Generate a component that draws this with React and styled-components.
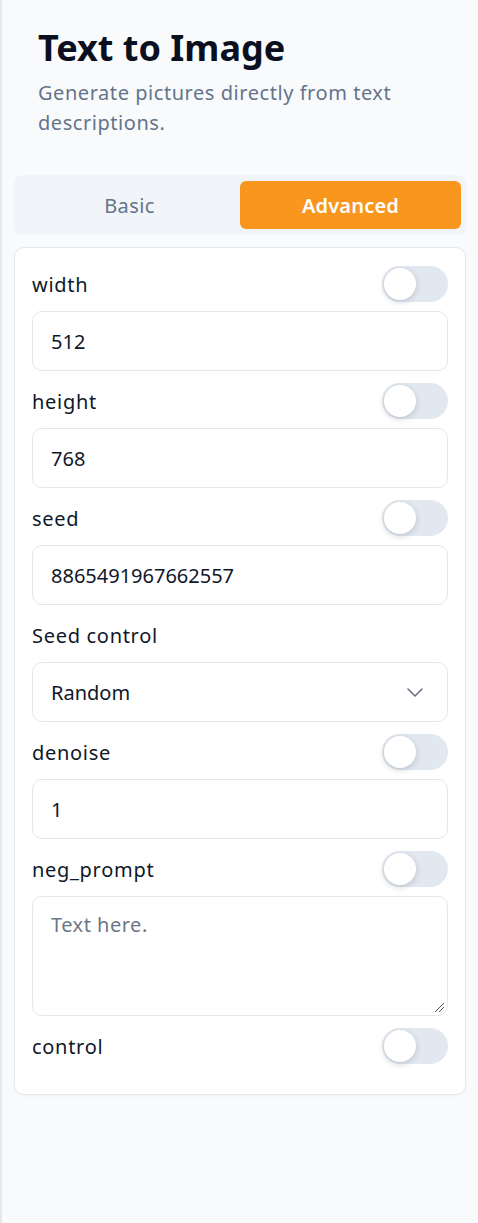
import React from 'react';
import styled, { createGlobalStyle } from 'styled-components';

const GlobalStyle = createGlobalStyle`
  html, body {
    margin: 0;
    padding: 0;
    background: #f9fafb;
  }
  * {
    box-sizing: border-box;
  }
  body {
    font-family: "Noto Sans", "Open Sans", sans-serif;
    color: #0f172a;
  }
`;

const Panel = styled.div`
  min-height: 100vh;
  border-left: 2px solid #e5e7eb;
  background: #f9fafb;
  padding: 0 12px 40px 12px;
`;

const Header = styled.div`
  padding: 24px 24px 0 24px;
`;

const Title = styled.h1`
  margin: 0;
  font-size: 36px;
  line-height: 48px;
  font-weight: 700;
  color: #0b1020;
`;

const Subtitle = styled.p`
  margin: 6px 0 0;
  font-size: 20px;
  line-height: 30px;
  letter-spacing: 0.55px;
  color: #64748b;
`;

const Tabs = styled.div`
  margin-top: 37px;
  display: grid;
  grid-template-columns: 1fr 1fr;
  padding: 6px 5px;
  background: #f1f5f9;
  border-radius: 8px;
`;

const Tab = styled.button`
  height: 48px;
  border: none;
  border-radius: 6px;
  font-family: inherit;
  font-size: 20px;
  letter-spacing: ${(p) => (p.$active ? '0.2px' : '0.4px')};
  font-weight: ${(p) => (p.$active ? 600 : 400)};
  color: ${(p) => (p.$active ? '#ffffff' : '#64748b')};
  background: ${(p) => (p.$active ? '#f8961e' : 'transparent')};
  cursor: pointer;
`;

const Card = styled.div`
  margin-top: 12px;
  background: #ffffff;
  border: 1px solid #e5e7eb;
  border-radius: 10px;
  box-shadow: 0 1px 3px rgba(0, 0, 0, 0.04);
  padding: 18px 17px 30px;
  display: flex;
  flex-direction: column;
  gap: 12px;
`;

const Field = styled.div`
  display: flex;
  flex-direction: column;
  gap: 9px;
`;

const LabelRow = styled.div`
  display: flex;
  align-items: center;
  justify-content: space-between;
  height: 36px;
`;

const Label = styled.span`
  font-size: 20px;
  letter-spacing: 0.7px;
  color: #0f172a;
`;

const Switch = styled.span`
  position: relative;
  width: 66px;
  height: 36px;
  border-radius: 18px;
  background: #e2e8f0;
  flex-shrink: 0;
`;

const Knob = styled.span`
  position: absolute;
  top: 2px;
  left: 2px;
  width: 32px;
  height: 32px;
  border-radius: 50%;
  background: #ffffff;
  box-shadow: 0 2px 6px rgba(15, 23, 42, 0.18);
`;

const Box = styled.div`
  height: ${(p) => p.$h || 60}px;
  border: 1px solid #e5e7eb;
  border-radius: 10px;
  background: #ffffff;
  padding: 0 18px;
  display: flex;
  align-items: ${(p) => (p.$top ? 'flex-start' : 'center')};
  justify-content: space-between;
  font-size: 20px;
  color: #0f172a;
  position: relative;
`;

const Placeholder = styled.span`
  padding-top: 14px;
  letter-spacing: 0.5px;
  color: #6b7788;
`;

const Chevron = styled.svg`
  margin-right: 6px;
`;

const Grip = styled.svg`
  position: absolute;
  right: 2px;
  bottom: 2px;
`;

const Toggle = () => (
  <Switch>
    <Knob />
  </Switch>
);

const NumberField = ({ label, value }) => (
  <Field>
    <LabelRow>
      <Label>{label}</Label>
      <Toggle />
    </LabelRow>
    <Box>{value}</Box>
  </Field>
);

const App = () => (
  <>
    <GlobalStyle />
    <Panel>
      <Header>
        <Title>Text to Image</Title>
        <Subtitle>Generate pictures directly from text descriptions.</Subtitle>
      </Header>
      <Tabs>
        <Tab>Basic</Tab>
        <Tab $active>Advanced</Tab>
      </Tabs>
      <Card>
        <NumberField label="width" value="512" />
        <NumberField label="height" value="768" />
        <NumberField label="seed" value="8865491967662557" />
        <Field>
          <LabelRow>
            <Label>Seed control</Label>
          </LabelRow>
          <Box>
            Random
            <Chevron width="16" height="9" viewBox="0 0 16 9" fill="none" stroke="#6b7280" strokeWidth="1.6" strokeLinecap="round" strokeLinejoin="round">
              <path d="M1 1 L8 8 L15 1" />
            </Chevron>
          </Box>
        </Field>
        <NumberField label="denoise" value="1" />
        <Field>
          <LabelRow>
            <Label>neg_prompt</Label>
            <Toggle />
          </LabelRow>
          <Box $h={120} $top>
            <Placeholder>Text here.</Placeholder>
            <Grip width="12" height="12" viewBox="0 0 12 12" stroke="#555" strokeWidth="1">
              <path d="M2 11 L11 2 M6 11 L11 6" />
            </Grip>
          </Box>
        </Field>
        <LabelRow>
          <Label>control</Label>
          <Toggle />
        </LabelRow>
      </Card>
    </Panel>
  </>
);

export default App;
